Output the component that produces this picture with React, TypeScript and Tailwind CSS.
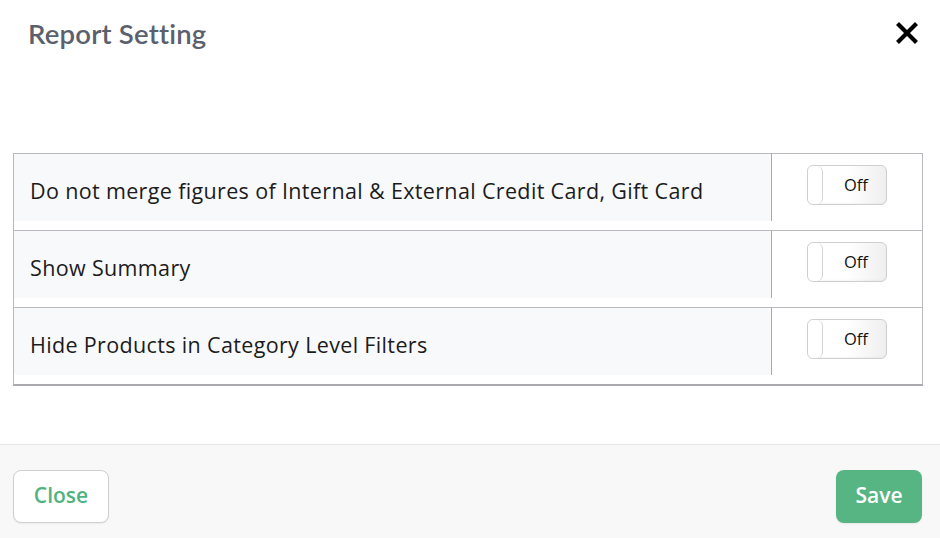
import { useState } from 'react';

const rows = [
  'Do not merge figures of Internal & External Credit Card, Gift Card',
  'Show Summary',
  'Hide Products in Category Level Filters',
];

function OffToggle({ on, onClick }: { on: boolean; onClick: () => void }) {
  return (
    <button
      onClick={onClick}
      className="relative flex h-[40px] w-[80px] items-center rounded-[6px] border border-[#cfcfcf] bg-gradient-to-r from-white via-white to-[#efefef] shadow-[inset_0_-1px_2px_rgba(0,0,0,0.04)]"
    >
      <span className="h-full w-[15px] rounded-[6px] border-r border-[#d4d4d4] bg-white" />
      <span className="flex-1 pl-[3px] text-center text-[16.5px] leading-none text-[#111]">{on ? 'On' : 'Off'}</span>
    </button>
  );
}

export default function App() {
  const [flags, setFlags] = useState([false, false, false]);

  return (
    <div className="flex h-[538px] w-[940px] flex-col bg-white font-['Open_Sans',sans-serif]">
      <div className="flex items-start justify-between pl-[28px] pr-[22px] pt-[16px]">
        <h1 className="font-['Lato',sans-serif] text-[27.5px] font-semibold leading-[36px] tracking-[0.2px] text-[#5a616d]">
          Report Setting
        </h1>
        <button className="mt-[6px]">
          <svg width="22" height="22" viewBox="0 0 22 22">
            <path d="M3 3 L19 19 M19 3 L3 19" stroke="#000" strokeWidth="4.2" strokeLinecap="square" />
          </svg>
        </button>
      </div>

      {/* settings table */}
      <div className="ml-[13px] mr-[17px] mt-[101px] border border-b-2 border-[#b9b9bd] border-b-[#a9a9ad]">
        {rows.map((label, i) => (
          <div key={label} className={`flex ${i > 0 ? 'h-[77px] border-t border-[#b9b9bd]' : 'h-[76px]'}`}>
            <div className="h-[67px] flex-1 border-r border-[#a9a9ad] bg-[#f8f9fb] pl-[16px] pt-[23px] text-[21.5px] leading-[28px] tracking-[0.35px] text-[#1c1c1c]">
              {label}
            </div>
            <div className="flex w-[150px] justify-center pt-[11px]">
              <OffToggle
                on={flags[i]}
                onClick={() => setFlags(flags.map((f, j) => (j === i ? !f : f)))}
              />
            </div>
          </div>
        ))}
      </div>

      <div className="mt-auto flex h-[94px] items-center justify-between border-t border-[#e6e6e6] bg-[#f8f8f8] pl-[13px] pr-[18px] pt-[9px]">
        <button className="h-[53px] w-[96px] rounded-[8px] border border-[#cfcfcf] bg-white text-[21px] font-semibold text-[#4fb37f] shadow-[0_1px_2px_rgba(0,0,0,0.06)]">
          Close
        </button>
        <button className="h-[53px] w-[86px] rounded-[8px] bg-[#57b584] text-[21px] font-semibold text-white shadow-[0_1px_2px_rgba(0,0,0,0.08)]">
          Save
        </button>
      </div>
    </div>
  );
}
